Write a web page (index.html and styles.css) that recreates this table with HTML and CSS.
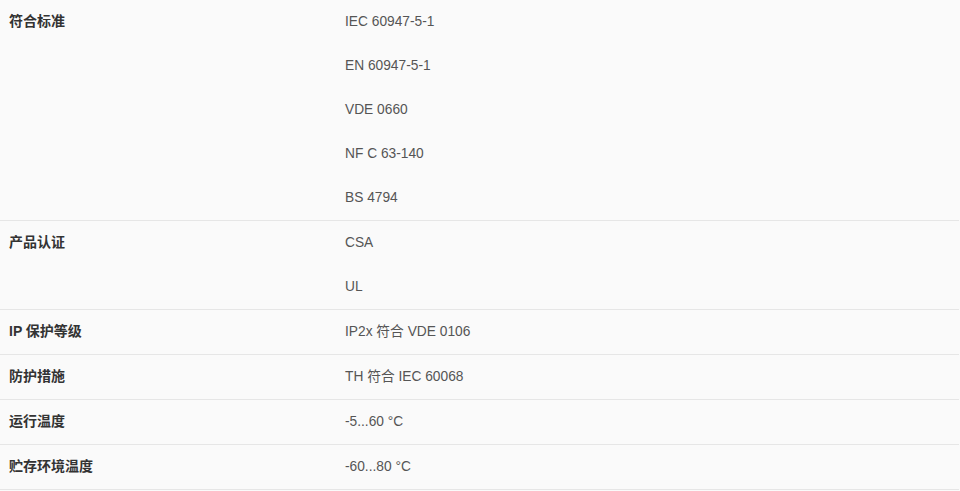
FILE: index.html
```html
<!DOCTYPE html>
<html lang="zh-CN">
<head>
<meta charset="utf-8">
<link rel="stylesheet" href="styles.css">
</head>
<body>
<div class="specs">
  <div class="row">
    <div class="label">符合标准</div>
    <div class="values">
      <div class="val">IEC 60947-5-1</div>
      <div class="val">EN 60947-5-1</div>
      <div class="val">VDE 0660</div>
      <div class="val">NF C 63-140</div>
      <div class="val">BS 4794</div>
    </div>
  </div>
  <div class="row">
    <div class="label">产品认证</div>
    <div class="values">
      <div class="val">CSA</div>
      <div class="val">UL</div>
    </div>
  </div>
  <div class="row">
    <div class="label">IP 保护等级</div>
    <div class="values"><div class="val">IP2x 符合 VDE 0106</div></div>
  </div>
  <div class="row">
    <div class="label">防护措施</div>
    <div class="values"><div class="val">TH 符合 IEC 60068</div></div>
  </div>
  <div class="row">
    <div class="label">运行温度</div>
    <div class="values"><div class="val">-5...60 °C</div></div>
  </div>
  <div class="row">
    <div class="label">贮存环境温度</div>
    <div class="values"><div class="val">-60...80 °C</div></div>
  </div>
</div>
</body>
</html>
```
FILE: styles.css
```css
html, body {
  margin: 0;
  padding: 0;
  background: #fafafa;
}
body {
  font-family: "Liberation Sans", Arial, "Noto Sans CJK SC", sans-serif;
  width: 959px;
}
.specs {
  display: flex;
  flex-direction: column;
}
.row {
  display: flex;
  border-bottom: 1px solid #e6e6e6;
}
.label {
  width: 336px;
  padding-left: 9px;
  height: 44px;
  line-height: 42px;
  font-size: 14px;
  font-weight: bold;
  color: #333;
}
.values {
  display: flex;
  flex-direction: column;
}
.val {
  height: 44px;
  line-height: 44px;
  font-size: 13.75px;
  color: #555;
}
```
